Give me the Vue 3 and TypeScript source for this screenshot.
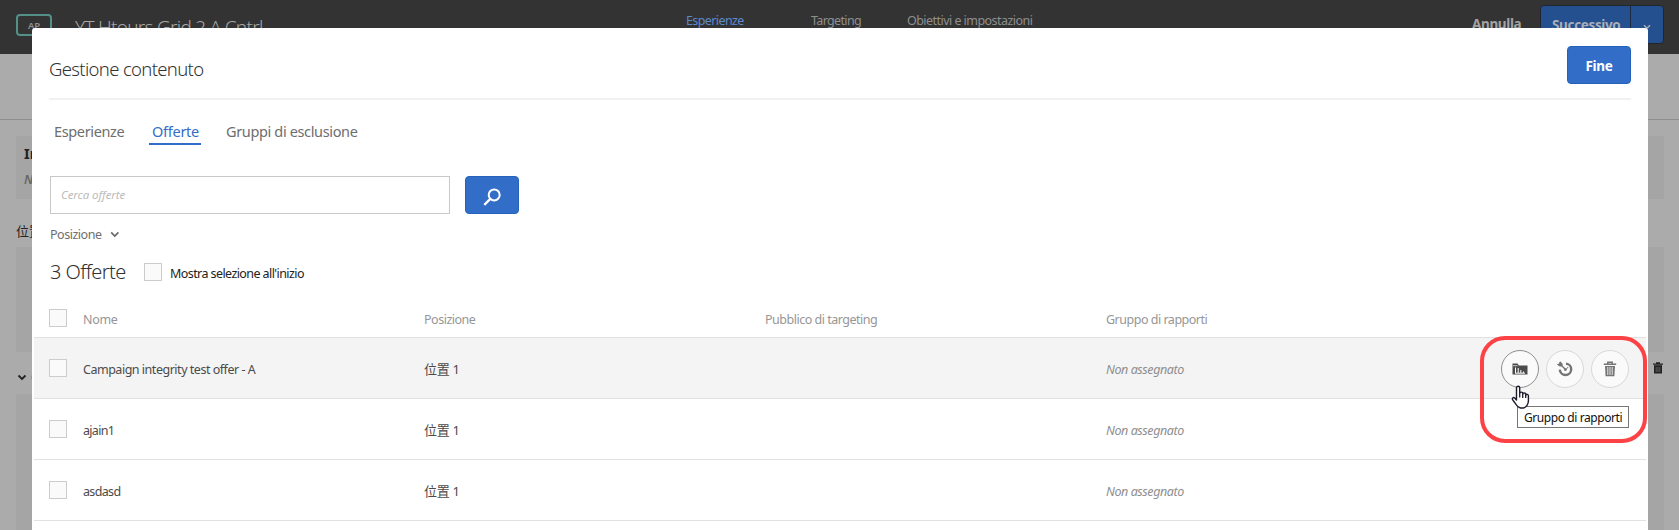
<script setup lang="ts">
interface Offer {
  name: string
  cls: string
  hovered: boolean
}

const offers: Offer[] = [
  { name: 'Campaign integrity test offer - A', cls: 'long', hovered: true },
  { name: 'ajain1', cls: 'short', hovered: false },
  { name: 'asdasd', cls: 'mid', hovered: false },
]
</script>

<template>
  <div class="screen">
    <!-- Dimmed page behind the dialog -->
    <header class="topbar">
      <div class="badge">AP</div>
      <div class="activity">YT Htours Grid 2 A Cntrl</div>
      <nav class="steps">
        <span class="step current">Esperienze</span>
        <span class="step second">Targeting</span>
        <span class="step third">Obiettivi e impostazioni</span>
      </nav>
      <div class="cancel">Annulla</div>
      <div class="split">
        <span class="next">Successivo</span>
        <span class="caret">
          <svg width="8" height="6" viewBox="0 0 8 6"><path d="M1 1.2 4 4.2 7 1.2" fill="none" stroke="#a9afb8" stroke-width="1.5" /></svg>
        </span>
      </div>
    </header>
    <div class="subbar"></div>
    <main class="backdrop">
      <section class="panel info">
        <div class="info-title">Informazioni</div>
        <div class="info-note">Non assegnato</div>
      </section>
      <div class="location">位置 1</div>
      <section class="panel slot"></section>
      <div class="group">
        <svg class="fold" width="10" height="7" viewBox="0 0 10 7"><path d="M1.5 1.5 5 5 8.500 1.500" fill="none" stroke="#222" stroke-width="1.8" /></svg>
        <span class="group-name">Offerta</span>
        <svg class="bin" width="10" height="12" viewBox="0 0 10 12">
          <path d="M0 1.500h3V.3h4v1.200h3v1.300H0z" fill="#222" />
          <path d="M1 3.200h8V11.500H1z" fill="#222" />
          <path d="M3.200 5v5M5 5v5M6.800 5v5" stroke="#777" stroke-width=".7" />
        </svg>
      </div>
      <section class="panel rest"></section>
    </main>

    <div class="dialog">
      <div class="head">
        <h1>Gestione contenuto</h1>
        <button class="done">Fine</button>
      </div>

      <div class="tabs">
        <span class="tab t1">Esperienze</span>
        <span class="tab active">Offerte</span>
        <span class="tab t3">Gruppi di esclusione</span>
      </div>

      <div class="search">
        <div class="field">Cerca offerte</div>
        <button class="go">
          <svg width="18" height="18" viewBox="0 0 18 18">
            <circle cx="11.200" cy="6.900" r="5.500" fill="none" stroke="#fff" stroke-width="2" />
            <path d="M7.300 10.900 1.300 16.900" stroke="#fff" stroke-width="2.200" />
          </svg>
        </button>
      </div>

      <div class="filter">
        <span>Posizione</span>
        <svg width="10" height="7" viewBox="0 0 10 7"><path d="M1.200 1.400 4.800 5 8.400 1.400" fill="none" stroke="#666" stroke-width="1.600" /></svg>
      </div>

      <div class="summary">
        <h2>3 Offerte</h2>
        <span class="check"></span>
        <span class="toggle">Mostra selezione all'inizio</span>
      </div>

      <div class="table">
        <div class="row header">
          <span class="check"></span>
          <span class="cell nome">Nome</span>
          <span class="cell pos">Posizione</span>
          <span class="cell">Pubblico di targeting</span>
          <span class="cell">Gruppo di rapporti</span>
        </div>
        <div v-for="offer in offers" :key="offer.name" class="row" :class="{ hovered: offer.hovered }">
          <span class="check"></span>
          <span class="cell" :class="offer.cls">{{ offer.name }}</span>
          <span class="place">位置 1</span>
          <span></span>
          <span class="cell none">Non assegnato</span>
          <div v-if="offer.hovered" class="actions">
            <span class="action focus">
              <svg width="16" height="14" viewBox="0 0 16 14">
                <path d="M.5 12.500V1.500h5l1.300 2H15.500v9z" fill="#4b4b4b" />
                <path d="M1 3.700h4.500" stroke="#fff" stroke-width=".7" />
                <path d="M3.500 11V5.500M6.200 11V6M8.800 11V8M11.400 11V9.500M3 11.200h10" stroke="#fff" stroke-width="1" />
              </svg>
            </span>
            <span class="action">
              <svg width="16" height="16" viewBox="0 0 16 16">
                <path d="M9 2.600a5.700 5.700 0 1 1-6.200 6" fill="none" stroke="#747474" stroke-width="2.400" />
                <path d="M8 9.400 11.200 6" stroke="#747474" stroke-width="1" />
                <circle cx="8.400" cy="8.600" r="1.400" fill="#747474" />
                <path d="M3 3 8 8" stroke="#747474" stroke-width="1.400" />
                <path d="M.5 3.500l2-.5L3 .8l2.200 2-.3 2-2 .3z" fill="#747474" stroke="#747474" stroke-width="1" />
              </svg>
            </span>
            <span class="action">
              <svg width="14" height="16" viewBox="0 0 14 16">
                <path d="M.8 3.200h12.400M4.800 3V1.200h4.400V3" fill="none" stroke="#747474" stroke-width="1.500" />
                <path d="M2 5h10l-.6 10.200H2.600z" fill="#747474" />
                <path d="M4.800 6v8M7 6v8M9.200 6v8" stroke="#f4f4f4" stroke-width=".9" />
              </svg>
            </span>
          </div>
        </div>
      </div>

      <div class="callout"></div>
      <div class="tooltip">Gruppo di rapporti</div>
      <svg class="cursor" width="19" height="25" viewBox="0 0 19 25">
        <path d="M5.500 15V2.800a1.600 1.600 0 0 1 3.200 0V8.500a1.500 1.500 0 0 1 3 .3v.4a1.500 1.500 0 0 1 3 .5v.5a1.400 1.400 0 0 1 2.700.6V16c0 3-2 6.500-5 7H9.500C7 22.500 5.500 20.500 4 18L1.700 14.800c-1-1.400.6-2.900 2-1.800z" fill="#fff" stroke="#1b1b2b" stroke-width="1.400" stroke-linejoin="round" />
        <path d="M8.700 8.500v4M11.700 9v4M14.700 10v3" stroke="#1b1b2b" stroke-width="1.300" />
      </svg>
    </div>
  </div>
</template>

<style>
body {
  margin: 0;
  overflow: hidden;
}
</style>

<style scoped>
.screen {
  position: relative;
  width: 1679px;
  height: 530px;
  overflow: hidden;
  background: #ababab;
  font-family: "Noto Sans", "Noto Sans CJK SC", sans-serif;
  font-size: 12.5px;
  line-height: 18px;
  color: #4b4b4b;
}
.screen * {
  box-sizing: border-box;
}
span {
  white-space: nowrap;
}
svg {
  display: block;
}

.topbar {
  display: flex;
  align-items: flex-start;
  height: 54px;
  background: #333;
  color: #8f8f8f;
}
.badge {
  width: 36px;
  height: 22px;
  margin: 14px 0 0 16px;
  border: 2px solid #549088;
  border-radius: 4px;
  text-align: center;
  font-size: 9.5px;
  font-weight: 600;
  line-height: 19px;
  letter-spacing: -0.2px;
}
.activity {
  width: 200px;
  margin: 14px 0 0 23px;
  font-size: 19px;
  font-weight: 300;
  line-height: 26px;
  letter-spacing: -0.73px;
  white-space: nowrap;
  color: #a6a6a6;
}
.steps {
  display: flex;
  width: 786px;
  margin: 12px 0 0 411px;
}
.step {
  width: 125px;
  letter-spacing: -0.65px;
}
.step.current {
  color: #5b8acb;
  letter-spacing: -0.6px;
}
.step.second {
  width: 96px;
}
.step.third {
  letter-spacing: -0.54px;
}
.cancel {
  width: 68px;
  margin-top: 15px;
  font-size: 13.5px;
  font-weight: 700;
  letter-spacing: -0.35px;
  color: #a3a3a3;
}
.split {
  display: flex;
  width: 124px;
  height: 39px;
  margin-top: 5px;
  border: 1px solid #20262f;
  border-radius: 4px;
  background: #24508f;
}
.next {
  width: 90px;
  padding: 10px 0 0 11px;
  border-right: 1px solid #1b2a42;
  font-size: 13.5px;
  font-weight: 700;
  letter-spacing: -0.35px;
  color: #a9afb8;
}
.caret {
  padding: 18px 0 0 12px;
}

.subbar {
  height: 66px;
  border-bottom: 1px solid #8f8f8f;
}
.backdrop {
  padding: 16px 15px 0 16px;
}
.panel {
  background: #a5a5a5;
}
.info {
  height: 63px;
  padding: 8px 8px 0;
}
.info-title {
  font-size: 14.5px;
  font-weight: 700;
  color: #222;
}
.info-note {
  margin-top: 9px;
  font-weight: 600;
  font-style: italic;
  color: #666;
}
.location {
  height: 48px;
  padding-top: 23px;
  font-size: 13px;
  color: #222;
}
.slot {
  height: 105px;
}
.group {
  display: flex;
  align-items: center;
  height: 42px;
  padding: 0 1px;
  color: #444;
}
.fold {
  margin-top: 9px;
}
.group-name {
  margin: 9px 0 0 4px;
}
.bin {
  margin-left: auto;
  margin-top: -10px;
}
.rest {
  height: 136px;
}

.dialog {
  position: absolute;
  left: 32px;
  top: 28px;
  width: 1616px;
  height: 520px;
  border-radius: 3px 3px 0 0;
  background: #fff;
}
.head {
  display: flex;
  justify-content: space-between;
  align-items: flex-start;
  height: 72px;
  margin: 0 17px;
  padding-top: 18px;
  border-bottom: 2px solid #f1f1f1;
}
h1 {
  margin: 10px 0 0;
  font-size: 18.5px;
  font-weight: 300;
  line-height: 26px;
  letter-spacing: -0.66px;
  color: #323232;
}
button {
  margin: 0;
  padding: 0;
  border: 1px solid #2462bb;
  border-radius: 4px;
  background: #326ec8;
  color: #fff;
  font-family: inherit;
}
.done {
  width: 64px;
  height: 38px;
  padding-top: 1px;
  font-size: 13.5px;
  font-weight: 700;
  letter-spacing: -0.3px;
}

.tabs {
  display: flex;
  height: 48px;
  padding: 20px 0 0 17px;
  font-size: 14.5px;
  line-height: 22px;
  color: #6e6e6e;
}
.tab {
  padding: 0 5px;
  letter-spacing: -0.36px;
}
.tab.t1 {
  width: 100px;
}
.tab.active {
  width: 52px;
  height: 25px;
  padding: 0 3px;
  border-bottom: 2px solid #326ec8;
  color: #326ec8;
  letter-spacing: -0.27px;
}
.tab.t3 {
  margin-left: 20px;
}

.search {
  display: flex;
  gap: 15px;
  padding: 28px 0 0 18px;
}
.field {
  width: 400px;
  height: 38px;
  padding: 0 10px;
  border: 1px solid #c8c8c8;
  font-size: 11.5px;
  font-style: italic;
  line-height: 36px;
  letter-spacing: -0.08px;
  color: #bcbcbc;
}
.go {
  display: flex;
  justify-content: center;
  align-items: center;
  width: 54px;
  height: 38px;
}
.go svg {
  margin-top: 4px;
}
.filter {
  display: flex;
  align-items: center;
  gap: 9px;
  height: 39px;
  padding: 2px 0 0 18px;
  letter-spacing: -0.48px;
  color: #6e6e6e;
}
.summary {
  display: flex;
  align-items: center;
  height: 38px;
  padding-left: 18px;
}
h2 {
  width: 94px;
  margin: 0;
  font-size: 20px;
  font-weight: 300;
  letter-spacing: -0.6px;
  color: #323232;
}
.check {
  width: 18px;
  height: 18px;
  border: 1px solid #ccc;
  background: #fafafa;
}
.toggle {
  margin: 3px 0 0 8px;
  font-weight: 450;
  letter-spacing: -0.58px;
  color: #222;
}

.table {
  margin: 0 2px;
}
.row {
  position: relative;
  display: grid;
  grid-template-columns: 34px 341px 341px 341px 1fr;
  align-items: center;
  height: 61px;
  padding-left: 15px;
  border-bottom: 1px solid #e1e1e1;
  font-weight: 450;
}
.cell {
  padding-top: 3px;
}
.row.header {
  height: 47px;
  padding-top: 8px;
  color: #969696;
  letter-spacing: -0.49px;
}
.row .nome {
  letter-spacing: -0.3px;
}
.row.hovered {
  background: #f4f4f4;
}
.row .long {
  letter-spacing: -0.48px;
}
.row .short {
  letter-spacing: -0.7px;
}
.row .mid {
  letter-spacing: -0.65px;
}
.place {
  padding-top: 1px;
  font-size: 13px;
  font-weight: 400;
  letter-spacing: -0.3px;
}
.row .none {
  font-style: italic;
  letter-spacing: -0.42px;
  color: #8e8e8e;
}
.actions {
  position: absolute;
  right: 17px;
  top: 12px;
  display: flex;
  gap: 7px;
}
.action {
  display: flex;
  justify-content: center;
  align-items: center;
  width: 38px;
  height: 38px;
  border: 1px solid #d8d8d8;
  border-radius: 50%;
  background: #fafafa;
}
.action.focus {
  border-color: #8f8f8f;
}

.callout {
  position: absolute;
  left: 1448px;
  top: 308px;
  width: 167px;
  height: 107px;
  border: 4px solid #fd4245;
  border-radius: 25px;
}
.tooltip {
  position: absolute;
  left: 1485px;
  top: 378px;
  width: 112px;
  height: 22px;
  padding-left: 6px;
  border: 1px solid #767676;
  background: #fff;
  font-size: 12px;
  line-height: 21px;
  letter-spacing: -0.42px;
  white-space: nowrap;
  color: #111;
}
.cursor {
  position: absolute;
  left: 1479px;
  top: 357px;
}
</style>
